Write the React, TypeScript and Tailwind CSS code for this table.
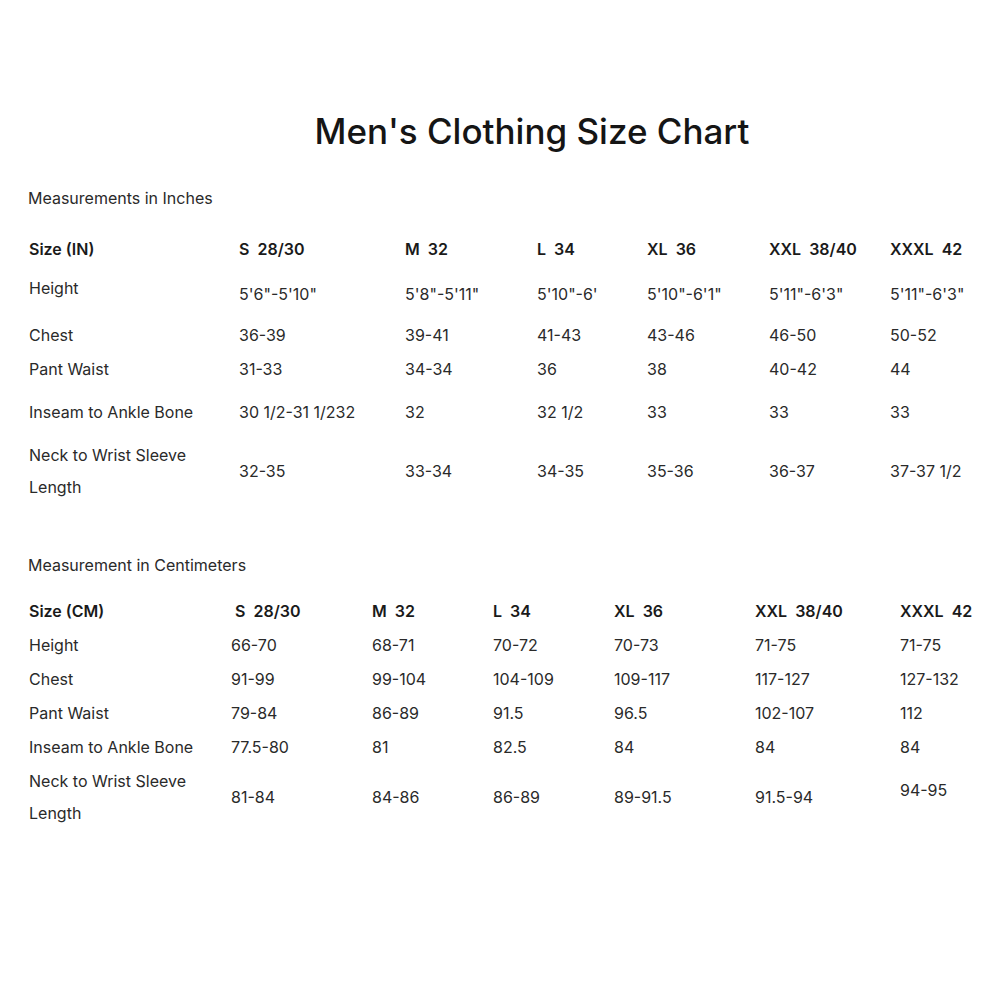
const INCH_COLS = "grid-cols-[239px_166px_132px_110px_122px_121px_1fr]";
const CM_COLS = "grid-cols-[231px_141px_121px_121px_141px_145px_1fr]";

type Row = { label: string; values: string[]; h: string; labelClass?: string; valueClass?: string[] };

const inchHeader = ["S  28/30", "M  32", "L  34", "XL  36", "XXL  38/40", "XXXL  42"];
const inchRows: Row[] = [
  { label: "Height", values: ["5'6\"-5'10\"", "5'8\"-5'11\"", "5'10\"-6'", "5'10\"-6'1\"", "5'11\"-6'3\"", "5'11\"-6'3\""], h: "h-[56px]", labelClass: "-translate-y-[6px]" },
  { label: "Chest", values: ["36-39", "39-41", "41-43", "43-46", "46-50", "50-52"], h: "h-[26px]" },
  { label: "Pant Waist", values: ["31-33", "34-34", "36", "38", "40-42", "44"], h: "h-[42px]" },
  { label: "Inseam to Ankle Bone", values: ["30 1/2-31 1/232", "32", "32 1/2", "33", "33", "33"], h: "h-[44px]" },
  { label: "Neck to Wrist Sleeve\nLength", values: ["32-35", "33-34", "34-35", "35-36", "36-37", "37-37 1/2"], h: "h-[74px]", labelClass: "leading-8" },
];

const cmHeader = [" S  28/30", "M  32", "L  34", "XL  36", "XXL  38/40", "XXXL  42"];
const cmRows: Row[] = [
  { label: "Height", values: ["66-70", "68-71", "70-72", "70-73", "71-75", "71-75"], h: "h-[34px]" },
  { label: "Chest", values: ["91-99", "99-104", "104-109", "109-117", "117-127", "127-132"], h: "h-[34px]" },
  { label: "Pant Waist", values: ["79-84", "86-89", "91.5", "96.5", "102-107", "112"], h: "h-[34px]" },
  { label: "Inseam to Ankle Bone", values: ["77.5-80", "81", "82.5", "84", "84", "84"], h: "h-[34px]" },
  {
    label: "Neck to Wrist Sleeve\nLength",
    values: ["81-84", "84-86", "86-89", "89-91.5", "91.5-94", "94-95"],
    h: "h-[66px]",
    labelClass: "leading-8",
    valueClass: ["", "", "", "", "", "-translate-y-[7px]"],
  },
];

function SizeTable({ cols, title, header, headLabel, rows, gap }: { cols: string; title: string; header: string[]; headLabel: string; rows: Row[]; gap: string }) {
  return (
    <section>
      <p className="h-6 leading-6 pl-[28px]">{title}</p>
      <div className={gap}>
        <div className={`grid ${cols} h-[34px] items-center leading-6 font-semibold text-[#1a1a1a]`}>
          <span className="pl-[29px]">{headLabel}</span>
          {header.map((h) => (
            <span key={h} className="whitespace-pre">{h}</span>
          ))}
        </div>
        {rows.map((r) => (
          <div key={r.label} className={`grid ${cols} ${r.h} items-center leading-6`}>
            <span className={`pl-[29px] whitespace-pre-line ${r.labelClass ?? ""}`}>{r.label}</span>
            {r.values.map((v, i) => (
              <span key={i} className={`whitespace-nowrap ${r.valueClass?.[i] ?? ""}`}>{v}</span>
            ))}
          </div>
        ))}
      </div>
    </section>
  );
}

export default function App() {
  return (
    <div className="w-[1000px] h-[1000px] bg-white text-[16px] text-[#2a2a2a] font-['Inter',sans-serif] pt-[108px]">
      <h1 className="h-[46px] leading-[46px] text-center pl-[64px] text-[35px] font-medium text-[#151515]">
        Men's Clothing Size Chart
      </h1>
      <div className="mt-8">
        <SizeTable cols={INCH_COLS} title="Measurements in Inches" header={inchHeader} headLabel="Size (IN)" rows={inchRows} gap="mt-[22px]" />
      </div>
      <div className="mt-[45px]">
        <SizeTable cols={CM_COLS} title="Measurement in Centimeters" header={cmHeader} headLabel="Size (CM)" rows={cmRows} gap="mt-[17px]" />
      </div>
    </div>
  );
}
